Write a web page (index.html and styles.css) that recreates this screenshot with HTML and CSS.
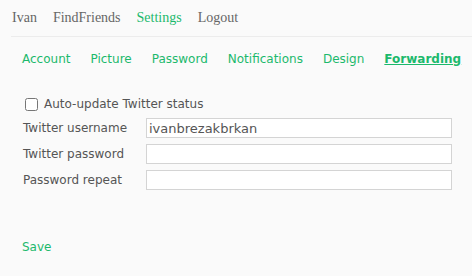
FILE: index.html
```html
<!DOCTYPE html>
<html lang="en">
<head>
	<meta charset="UTF-8">
	<title>Settings - Forwarding</title>
	<link rel="stylesheet" href="styles.css">
</head>
<body>
	<nav class="top-nav">
		<a href="#">Ivan</a>
		<a href="#">FindFriends</a>
		<a href="#" class="active">Settings</a>
		<a href="#">Logout</a>
	</nav>
	<section class="tabs">
		<a href="#">Account</a>
		<a href="#">Picture</a>
		<a href="#">Password</a>
		<a href="#">Notifications</a>
		<a href="#">Design</a>
		<a href="#" class="current">Forwarding</a>
	</section>
	<form class="forward-form">
		<label class="check-row">
			<input type="checkbox" id="chkAutoUpdate">
			<span>Auto-update Twitter status</span>
		</label>
		<div class="field first">
			<label for="txtUsername">Twitter username</label>
			<input type="text" id="txtUsername" value="ivanbrezakbrkan">
		</div>
		<div class="field">
			<label for="txtPassword">Twitter password</label>
			<input type="password" id="txtPassword">
		</div>
		<div class="field">
			<label for="txtRepeat">Password repeat</label>
			<input type="password" id="txtRepeat">
		</div>
		<a href="#" class="save">Save</a>
	</form>
</body>
</html>
```

FILE: styles.css
```css
body{
	margin: 0;
	background-color: #fafafa;
	font-family: "DejaVu Sans", Verdana, sans-serif;
	font-size: 12px;
	color: #555;
}
a{
	text-decoration: none;
	color: #1cb96c;
}
.top-nav{
	display: flex;
	gap: 16px;
	margin-left: 11px;
	padding: 10px 0 10px 1px;
	border-bottom: 1px solid #ececec;
	font-family: "Liberation Serif", "Times New Roman", serif;
	font-size: 14px;
}
.top-nav a{
	color: #666;
}
.top-nav a.active{
	color: #1cb96c;
}
.tabs{
	display: flex;
	gap: 20px;
	padding: 15px 0 0 22px;
	font-size: 12px;
}
.tabs a.current{
	font-weight: bold;
	text-decoration: underline;
}
.forward-form{
	padding: 31px 0 0 23px;
}
.check-row{
	display: flex;
	align-items: center;
	gap: 6px;
	margin-left: 2px;
	font-size: 12px;
}
.check-row input{
	margin: 0;
	width: 13px;
	height: 13px;
}
.field{
	display: flex;
	align-items: center;
	margin-top: 6px;
	font-size: 12px;
}
.field.first{
	margin-top: 7px;
}
.field label{
	width: 123px;
}
.field input{
	width: 306px;
	height: 20px;
	box-sizing: border-box;
	border: 1px solid #d4d4d4;
	background: #fff;
	padding: 0 2px;
	font-family: "DejaVu Sans", Verdana, sans-serif;
	font-size: 13px;
	color: #555;
}
.save{
	display: block;
	margin: 50px 0 0 -1px;
	font-size: 12px;
}
```
